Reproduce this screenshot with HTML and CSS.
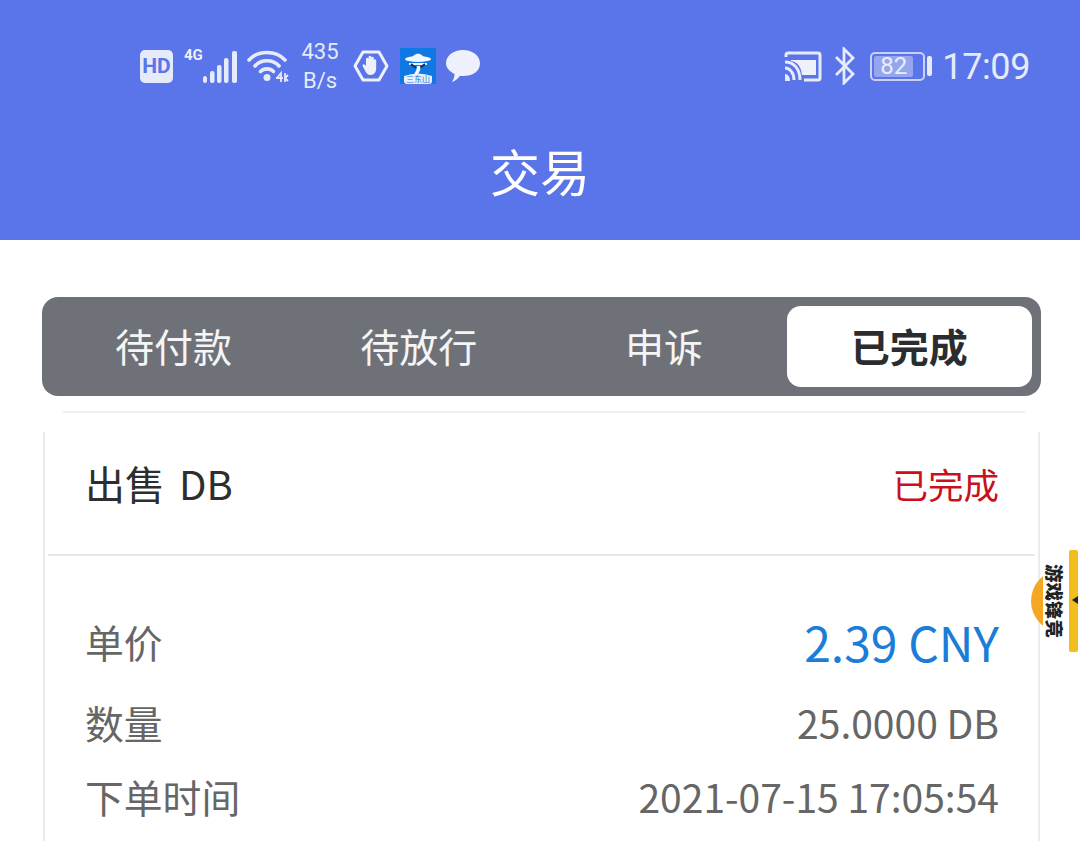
FILE: index.html
```html
<!DOCTYPE html>
<html lang="zh-CN">
<head>
<meta charset="utf-8">
<title>交易</title>
<link rel="stylesheet" href="styles.css">
</head>
<body>
<div class="page">
  <header class="header">
    <div class="status">
      <div class="status-left">
        <span class="hd">HD</span>
        <span class="net"><span class="four-g">4G</span>
          <svg class="signal" width="37" height="34" viewBox="0 0 37 34"><g fill="#e6ebfb"><rect x="1" y="26" width="4" height="7" rx="2"/><rect x="8" y="21" width="4.500" height="12" rx="2"/><rect x="15" y="15" width="4.500" height="18" rx="2"/><rect x="22" y="8" width="4.500" height="25" rx="2"/><rect x="30" y="1" width="5" height="32" rx="2"/></g></svg>
        </span>
        <svg class="wifi" width="42" height="36" viewBox="0 0 42 36"><g fill="none" stroke="#e6ebfb" stroke-width="3.600" stroke-linecap="round"><path d="M2 12C11 2 29 2 38 12"/><path d="M8 18C14 11 26 11 32 18"/><path d="M13.500 23.500C17 20 23 20 26.500 23.500"/></g><circle cx="20" cy="29.500" r="3.500" fill="#e6ebfb"/><path d="M30 30l4-5v9M29 30h7M38 25v9M38 30l3-3M38 30l3 3" fill="none" stroke="#e6ebfb" stroke-width="1.800"/></svg>
        <span class="speed"><span>435</span><span>B/s</span></span>
        <svg class="hand" width="36" height="34" viewBox="0 0 36 34"><path d="M10 3h16l8 14-8 14H10L2 17z" fill="none" stroke="#eef1fc" stroke-width="3" stroke-linejoin="round"/><path d="M13 17v-7a1.300 1.300 0 0 1 2.600 0v-2a1.300 1.300 0 0 1 2.600 0v1a1.300 1.300 0 0 1 2.600 0v2a1.300 1.300 0 0 1 2.400 0v8c0 4-2 7-5.500 7-3 0-4.500-2-6-5l-2-4c-.8-1.600 1.200-2.600 2.300-1.200z" fill="#eef1fc"/></svg>
        <span class="app">
          <svg width="36" height="37" viewBox="0 0 36 37"><rect width="36" height="36" fill="#0f78e2"/><ellipse cx="18" cy="11" rx="13" ry="3" fill="#f2f6fd"/><path d="M12 9q6-7 12 0z" fill="#f2f6fd"/><path d="M9 16h18" stroke="#f2f6fd" stroke-width="2"/><path d="M11 16l5 4M25 16l-5 4" stroke="#0b2f66" stroke-width="2"/><path d="M17 18h3c1 3 0 5-2 8h-4c2-3 3-5 3-8z" fill="#f2f6fd"/><path d="M4 28q14-5 28 0v5a3 3 0 0 1-3 3H7a3 3 0 0 1-3-3z" fill="#e6f0fb"/></svg>
          <span class="app-label">三东山</span>
        </span>
        <svg class="bubble" width="36" height="34" viewBox="0 0 36 34"><path d="M18 1c9.500 0 17 5.500 17 13.500S27.500 27 18 27c-1 0-2 0-3-.2C13 29.500 10.500 32 7 33c1.500-2.500 2.500-5 2.500-8C4.500 22.500 1 18.500 1 14.500 1 6.500 8.500 1 18 1z" fill="#eef1fc"/></svg>
      </div>
      <div class="status-right">
        <svg class="cast" width="38" height="31" viewBox="0 0 38 31"><path d="M2 6V4a2 2 0 0 1 2-2h30a2 2 0 0 1 2 2v23a2 2 0 0 1-2 2H20" fill="none" stroke="#e6ebfb" stroke-width="3"/><path d="M7 9h25v15H18C17 16 14 11 7 10z" fill="#eef1fc"/><g fill="none" stroke="#e6ebfb" stroke-width="3"><path d="M1 11c9 0 15 7 15 18"/><path d="M1 17c5 0 9 5 9 12"/></g><path d="M1 23c3 0 5 3 5 7H1z" fill="#e6ebfb"/></svg>
        <svg class="bt" width="24" height="38" viewBox="0 0 24 38"><path d="M3 10l17 17-9 9V2l9 9L3 28" fill="none" stroke="#e6ebfb" stroke-width="2.800"/></svg>
        <span class="battery"><span class="battery-body"><span class="battery-fill">82</span></span><span class="battery-cap"></span></span>
        <span class="clock">17:09</span>
      </div>
    </div>
    <h1 class="title">交易</h1>
  </header>
  <main class="content">
    <nav class="tabs">
      <span class="tab">待付款</span>
      <span class="tab">待放行</span>
      <span class="tab">申诉</span>
      <span class="tab tab-active">已完成</span>
    </nav>
    <div class="card-rule"></div>
    <section class="card">
      <div class="card-head">
        <span class="order-type">出售 DB</span>
        <span class="order-state">已完成</span>
      </div>
      <div class="card-body">
        <div class="row row-price"><span class="label">单价</span><span class="price">2.39 CNY</span></div>
        <div class="row row-qty"><span class="label">数量</span><span class="value">25.0000 DB</span></div>
        <div class="row row-time"><span class="label">下单时间</span><span class="value">2021-07-15 17:05:54</span></div>
      </div>
    </section>
  </main>
  <aside class="float">
    <span class="float-disc"></span>
    <span class="float-text">游戏锋竞</span>
    <span class="float-bar"></span>
    <span class="float-arrow"></span>
  </aside>
</div>
</body>
</html>
```
FILE: styles.css
```css
* { box-sizing: border-box; }
html, body { margin: 0; padding: 0; }
body { font-family: "Noto Sans CJK SC", "Noto Sans", sans-serif; background: #fff; }
.page { position: relative; width: 1080px; height: 841px; overflow: hidden; background: #fff; }

.header { height: 240px; background: #5a74e9; color: #fff; padding-top: 39px; display: flex; flex-direction: column; font-family: Roboto, "Noto Sans CJK SC", sans-serif; }
.status { height: 54px; display: flex; justify-content: space-between; align-items: center; padding: 0 50px 0 140px; color: #e6ebfb; }
.status-left { display: flex; align-items: center; }
.status-right { display: flex; align-items: center; }
.hd { width: 33px; height: 33px; background: #e6ebfb; color: #5a74e9; border-radius: 5px; font-size: 21px; font-weight: 700; line-height: 33px; text-align: center; }
.net { display: flex; align-items: flex-end; margin-left: 10px; position: relative; width: 60px; height: 36px; }
.four-g { position: absolute; left: 1px; top: -1px; font-size: 15px; line-height: 16px; font-weight: 700; color: #eef1fc; }
.signal { position: absolute; left: 19px; bottom: 0; }
.wifi { margin-left: 4px; }
.speed { display: flex; flex-direction: column; align-items: center; margin-left: 10px; font-size: 22px; line-height: 29px; color: #e6ebfb; width: 42px; }
.hand { margin-left: 12px; }
.app { position: relative; margin-left: 11px; width: 36px; height: 37px; display: block; }
.app svg { display: block; }
.app-label { position: absolute; left: 0; right: 0; bottom: 1px; text-align: center; font-size: 8px; line-height: 9px; color: #1279e0; }
.bubble { margin-left: 9px; }
.cast { margin-right: 11px; }
.bt { margin-right: 13px; }
.battery { display: flex; align-items: center; margin-right: 10px; }
.battery-body { width: 55px; height: 29px; border: 2px solid #c9d2f6; border-radius: 5px; padding: 2px; display: block; }
.battery-fill { display: block; height: 100%; width: 83%; background: #95a6ee; color: #e9edfc; font-size: 24px; line-height: 21px; text-align: center; border-radius: 2px; }
.battery-cap { width: 5px; height: 20px; margin-left: 2px; background: #e6ebfb; border-radius: 2px; }
.clock { font-size: 36px; line-height: 44px; padding-top: 2px; color: #e6ebfb; letter-spacing: -0.400px; }
.title { margin: 44px 0 0; font-size: 50px; line-height: 66px; font-weight: 400; text-align: center; color: #fff; font-family: "Noto Sans CJK SC", sans-serif; }

.content { padding: 57px 39px 0 42px; }
.tabs { height: 99px; background: #6e7278; border-radius: 16px; padding: 9px; display: grid; grid-template-columns: repeat(4, 1fr); }
.tab { display: flex; align-items: center; justify-content: center; padding-bottom: 3px; font-size: 39px; color: #f5f5f5; }
.tab-active { background: #fff; color: #2a2c30; border-radius: 14px; font-weight: 700; }

.card-rule { height: 2px; margin: 15px 16px 0 21px; background: #f0f0f0; }
.card { margin: 19px 1px 0; height: 500px; border-left: 2px solid #ebebeb; border-right: 2px solid #ebebeb; }
.card-head { height: 124px; margin: 0 3px; padding: 0 36px 20px 37px; display: flex; justify-content: space-between; align-items: center; border-bottom: 2px solid #e8e8e8; }
.order-type { font-size: 40px; word-spacing: 5px; color: #2e2e2e; }
.order-state { font-size: 35.500px; color: #c9101c; }
.card-body { padding: 0 39px 0 40px; }
.row { display: flex; justify-content: space-between; align-items: center; }
.row-price { height: 70px; margin-top: 50px; }
.row-qty { height: 60px; margin-top: 16px; }
.row-time { height: 60px; margin-top: 14px; }
.label { font-size: 38.800px; color: #666; }
.price { font-size: 48px; color: #1a7dd7; }
.value { font-size: 39px; color: #666; }

.float { position: absolute; left: 1030px; top: 550px; width: 50px; height: 102px; }
.float-disc { position: absolute; left: 1px; top: 20px; width: 60px; height: 62px; border-radius: 50%; background: #f5a623; clip-path: inset(0 48px 0 0); }
.float-text { position: absolute; left: 15px; top: 14px; writing-mode: vertical-rl; text-orientation: sideways; font-size: 18.500px; line-height: 20px; font-weight: 900; color: #222; }
.float-bar { position: absolute; left: 39px; top: 0; width: 9px; height: 102px; background: #f2be1e; border-radius: 2px; }
.float-arrow { position: absolute; left: 42px; top: 46px; width: 0; height: 0; border: 4px solid transparent; border-right: 6px solid #222; border-left: 0; }
```
